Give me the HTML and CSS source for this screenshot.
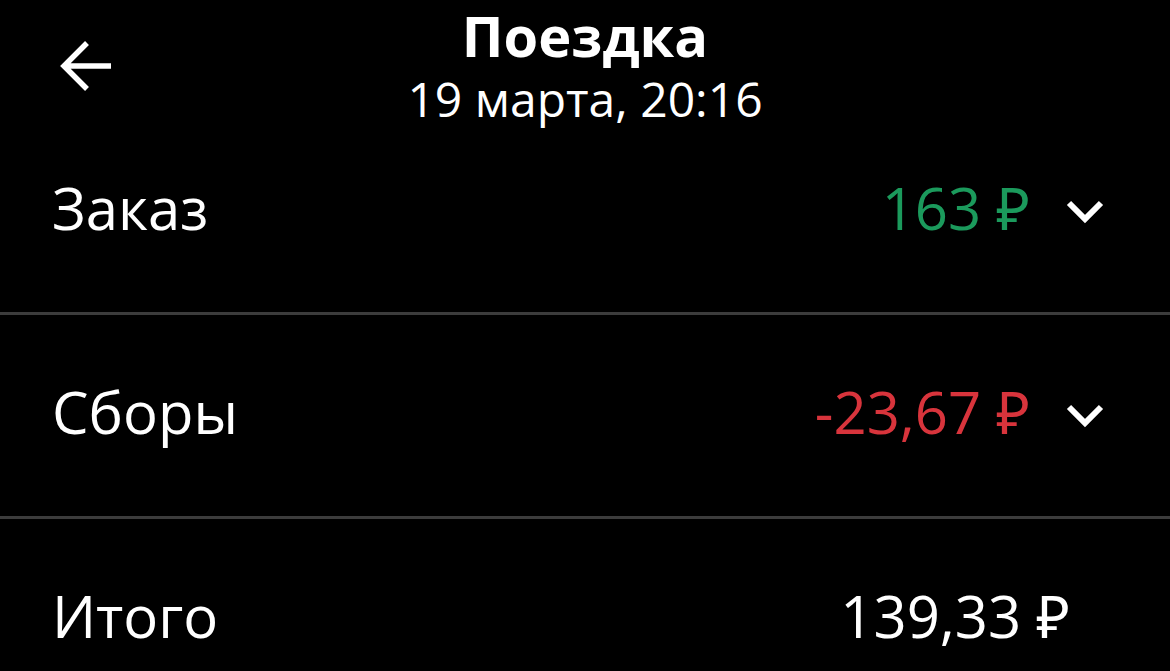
FILE: index.html
```html
<!DOCTYPE html>
<html lang="ru">
<head>
    <meta charset="UTF-8">
    <title>Поездка</title>
    <link rel="stylesheet" href="styles.css">
</head>
<body>
    <header class="topbar">
        <button class="back-btn" aria-label="Назад">
            <svg width="56" height="52" viewBox="0 0 56 52">
                <path d="M53 26 H6 M29 3 L6 26 L29 49" fill="none" stroke="#fff" stroke-width="5.5"/>
            </svg>
        </button>
        <div class="title-box">
            <h1 class="title">Поездка</h1>
            <div class="subtitle">19 марта, 20:16</div>
        </div>
    </header>

    <ul class="rows">
        <li class="row">
            <span class="label">Заказ</span>
            <span class="amount income">163 ₽</span>
            <svg class="chevron" width="40" height="28" viewBox="0 0 40 28">
                <path d="M4 5 L20 21 L36 5" fill="none" stroke="#fff" stroke-width="6"/>
            </svg>
        </li>
        <li class="row">
            <span class="label">Сборы</span>
            <span class="amount fee">-23,67 ₽</span>
            <svg class="chevron" width="40" height="28" viewBox="0 0 40 28">
                <path d="M4 5 L20 21 L36 5" fill="none" stroke="#fff" stroke-width="6"/>
            </svg>
        </li>
        <li class="row total">
            <span class="label">Итого</span>
            <span class="amount">139,33 ₽</span>
        </li>
    </ul>
</body>
</html>
```

FILE: styles.css
```css
body {
    margin: 0;
    background: #000;
    color: #fff;
    font-family: 'Open Sans', 'Noto Sans', sans-serif;
}

/* Шапка */
.topbar {
    position: relative;
    height: 111px;
}

.back-btn {
    position: absolute;
    left: 58px;
    top: 40px;
    padding: 0;
    border: none;
    background: none;
    line-height: 0;
}

.title-box {
    text-align: center;
    padding-top: 2px;
}

.title {
    margin: 0;
    font-size: 56px;
    font-weight: 700;
    line-height: 66px;
}

.subtitle {
    margin-top: 6px;
    font-size: 48px;
    line-height: 50px;
}

/* Строки */
.rows {
    list-style: none;
    margin: 0;
    padding: 0;
}

.row {
    display: flex;
    align-items: center;
    height: 193px;
    padding: 0 65px 8px 52px;
    border-bottom: 3px solid #3c3c3c;
    font-size: 58px;
}

.row.total {
    border-bottom: none;
    padding-right: 100px;
}

.label {
    flex: 1;
}

.amount.income {
    color: #1b9a5c;
}

.amount.fee {
    color: #d8343c;
}

.chevron {
    margin-left: 35px;
    margin-top: 8px;
}
```
